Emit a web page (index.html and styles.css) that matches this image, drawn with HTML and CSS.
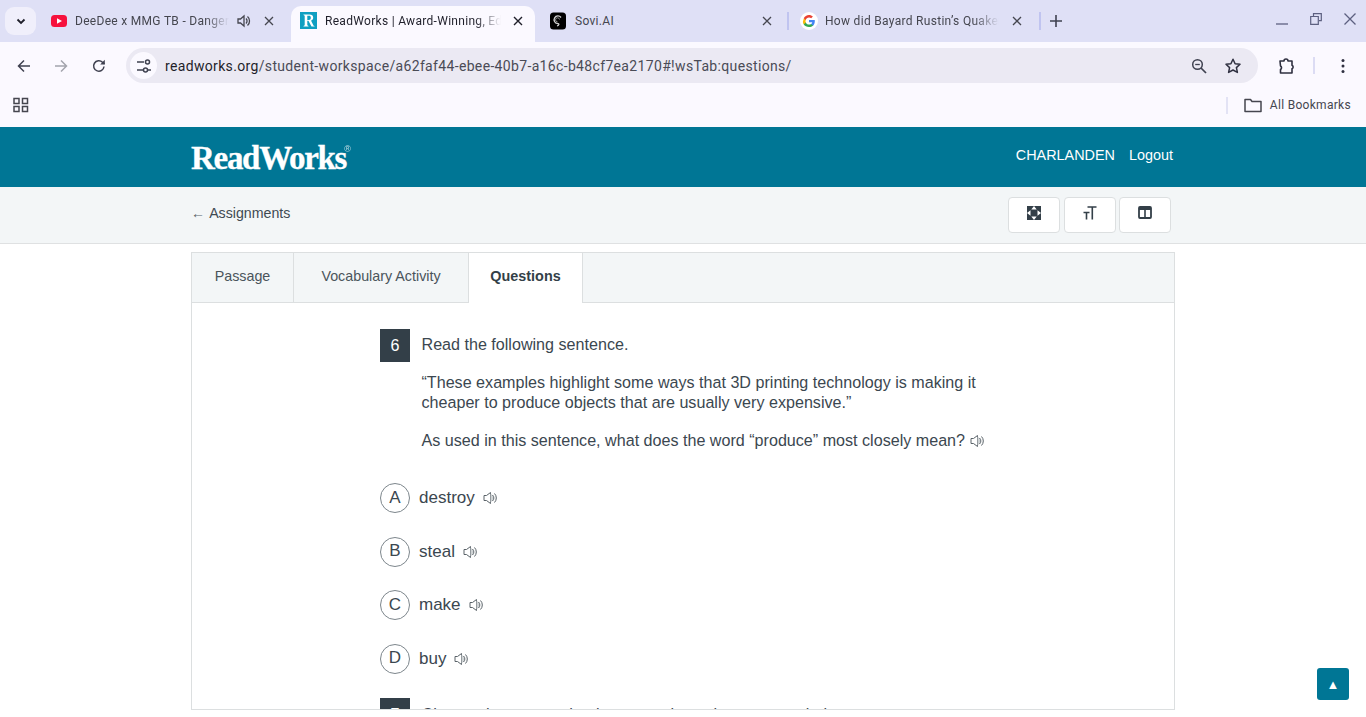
FILE: index.html
```html
<!DOCTYPE html>
<html lang="en">
<head>
<meta charset="utf-8">
<title>ReadWorks</title>
<link rel="stylesheet" href="styles.css">
</head>
<body>
<div class="browser">
  <div class="tabstrip">
    <button class="tabsearch"><svg width="12" height="12" viewBox="0 0 12 12"><path d="M2.500 4.500 6 8l3.500-3.500" fill="none" stroke="#1f1f2a" stroke-width="1.800"/></svg></button>
    <div class="tab tab-yt">
      <svg class="fav" width="18" height="18" viewBox="0 0 18 18"><rect x="1" y="3" width="16" height="12" rx="3.500" fill="#f6113d"/><path d="M7 6.200v5.600L12 9z" fill="#fff"/></svg>
      <span class="tab-title">DeeDee x MMG TB - Danger Zone</span>
      <svg class="audio" width="16" height="16" viewBox="0 0 16 16"><path d="M2 6v4h2.500L8 13V3L4.500 6z" fill="none" stroke="#45464f" stroke-width="1.300"/><path d="M10 5.500a3.500 3.500 0 0 1 0 5M11.500 3.500a6 6 0 0 1 0 9" fill="none" stroke="#45464f" stroke-width="1.300"/></svg>
      <svg class="close" width="10" height="10" viewBox="0 0 10 10"><path d="M1 1l8 8M9 1l-8 8" stroke="#45464f" stroke-width="1.300"/></svg>
    </div>
    <div class="tab tab-active">
      <svg class="fav" width="17" height="17" viewBox="0 0 17 17"><rect width="17" height="17" fill="#0f9fc1"/><path d="M3.500 2.500h6c2.400 0 3.700 1.200 3.700 3.200 0 1.500-.9 2.500-2.200 2.900l2.600 5.200.9.300v.5h-3l-3.100-5.800H7.300v4.500l1.200.8v.5H3.500v-.5l1.200-.8V3.800l-1.200-.8zM7.300 3.800V8h1.600c1.300 0 1.900-.8 1.900-2.200s-.6-2-1.900-2z" fill="#fff"/></svg>
      <span class="tab-title title-active">ReadWorks | Award-Winning, Edtech Nonprofit</span>
      <svg class="close" width="10" height="10" viewBox="0 0 10 10"><path d="M1 1l8 8M9 1l-8 8" stroke="#1f1f2a" stroke-width="1.400"/></svg>
    </div>
    <div class="tab tab-sovi">
      <svg class="fav" width="18" height="18" viewBox="0 0 18 18"><rect x="1" y="0.500" width="16" height="17" rx="3.500" fill="#000"/><path d="M12 5.500a3.800 3.800 0 1 0-3.500 6c1.800 0 2 2-.5 2.300" fill="none" stroke="#d0d0d0" stroke-width="1.300"/><path d="M10.500 7.500a2 2 0 1 0-2 2.300" fill="none" stroke="#909090"/></svg>
      <span class="tab-title tab-title-full">Sovi.AI</span>
      <svg class="close" width="10" height="10" viewBox="0 0 10 10"><path d="M1 1l8 8M9 1l-8 8" stroke="#45464f" stroke-width="1.300"/></svg>
    </div>
    <span class="tab-divider"></span>
    <div class="tab tab-g">
      <svg class="fav" width="18" height="18" viewBox="0 0 18 18"><circle cx="9" cy="9" r="9" fill="#fff"/><path d="M14.800 9.200c0-.5 0-.9-.1-1.300H9v2.400h3.300c-.2.800-.6 1.400-1.200 1.900v1.500h2c1.100-1.100 1.700-2.600 1.700-4.500z" fill="#4285f4"/><path d="M9 15c1.600 0 3-.5 4-1.500l-2-1.500c-.5.400-1.200.6-2 .6-1.500 0-2.800-1-3.300-2.400h-2V12.300C4.700 14 6.700 15 9 15z" fill="#34a853"/><path d="M5.700 10.700c-.3-.8-.3-1.600 0-2.400V6.700h-2a6 6 0 0 0 0 5.600z" fill="#fbbc05"/><path d="M9 5.400c.9 0 1.600.3 2.200.9l1.700-1.700C11.900 3.600 10.500 3 9 3 6.700 3 4.700 4.300 3.700 6.300l2 1.600C6.200 6.400 7.500 5.400 9 5.400z" fill="#ea4335"/></svg>
      <span class="tab-title">How did Bayard Rustin’s Quaker upbringing</span>
      <svg class="close" width="10" height="10" viewBox="0 0 10 10"><path d="M1 1l8 8M9 1l-8 8" stroke="#45464f" stroke-width="1.300"/></svg>
    </div>
    <span class="tab-divider divider-2"></span>
    <svg class="newtab" width="12" height="12" viewBox="0 0 12 12"><path d="M6 0v12M0 6h12" stroke="#3f4150" stroke-width="1.600"/></svg>
    <div class="winctrls">
      <svg width="12" height="12" viewBox="0 0 12 12"><path d="M0 11h12" stroke="#5d6080" stroke-width="1.300"/></svg>
      <svg width="12" height="12" viewBox="0 0 12 12"><path d="M3.500 3V.7h7.800v7H9M.7 3.500h7.600v7.800H.7z" fill="none" stroke="#5d6080" stroke-width="1.200"/></svg>
      <svg width="12" height="12" viewBox="0 0 12 12"><path d="M.5.500l11 11M11.500.500l-11 11" stroke="#5d6080" stroke-width="1.300"/></svg>
    </div>
  </div>
  <div class="toolbar">
    <svg class="nav-back" width="16" height="16" viewBox="0 0 16 16"><path d="M14 8H2.500M8 2.500 2.500 8 8 13.500" fill="none" stroke="#3f4150" stroke-width="1.500"/></svg>
    <svg class="nav-fwd" width="16" height="16" viewBox="0 0 16 16"><path d="M2 8h11.500M8 2.500 13.500 8 8 13.500" fill="none" stroke="#a3a4ad" stroke-width="1.500"/></svg>
    <svg class="nav-reload" width="16" height="16" viewBox="0 0 16 16"><path d="M13 8.500A5.200 5.200 0 1 1 11.500 4.300L13.500 6" fill="none" stroke="#3f4150" stroke-width="1.500"/><path d="M13.800 1.800v4.600H9.200z" fill="#3f4150"/></svg>
    <div class="omnibox">
      <span class="site-info"><svg width="16" height="16" viewBox="0 0 16 16"><path d="M1 4h7M12 12h3M1 12h6" stroke="#3f4150" stroke-width="1.500"/><circle cx="11.500" cy="4" r="2" fill="none" stroke="#3f4150" stroke-width="1.500"/><circle cx="9.500" cy="12" r="2" fill="none" stroke="#3f4150" stroke-width="1.500"/></svg></span>
      <span class="url"><span class="url-host">readworks.org</span>/student-workspace/a62faf44-ebee-40b7-a16c-b48cf7ea2170#!wsTab:questions/</span>
      <svg class="omni-zoom" width="16" height="16" viewBox="0 0 16 16"><circle cx="6.500" cy="6.500" r="4.800" fill="none" stroke="#3f4150" stroke-width="1.500"/><path d="M10 10l5 5" stroke="#3f4150" stroke-width="1.700"/><path d="M4.200 6.500h4.600" stroke="#3f4150" stroke-width="1.300"/></svg>
      <svg class="omni-star" width="18" height="18" viewBox="0 0 18 18"><path d="M9 2.200l2.100 4.500 4.900.6-3.600 3.300 1 4.800L9 13l-4.400 2.400 1-4.800L2 7.300l4.900-.6z" fill="none" stroke="#2f3040" stroke-width="1.500" stroke-linejoin="round"/></svg>
    </div>
    <svg class="ext" width="18" height="18" viewBox="0 0 18 18"><path d="M2 4h4a2 2 0 0 1 4 0h4v4.200a2 2 0 0 1 0 3.600V16H2.500v-3.500a2 2 0 0 0 0-3.500z" fill="none" stroke="#2f3040" stroke-width="1.600" stroke-linejoin="round"/></svg>
    <span class="tool-divider"></span>
    <svg class="menu-dots" width="4" height="16" viewBox="0 0 4 16"><circle cx="2" cy="2.500" r="1.500" fill="#2f3040"/><circle cx="2" cy="8" r="1.500" fill="#2f3040"/><circle cx="2" cy="13.500" r="1.500" fill="#2f3040"/></svg>
  </div>
  <div class="bookmarks">
    <svg class="apps" width="16" height="16" viewBox="0 0 16 16"><g fill="none" stroke="#45464f" stroke-width="1.500"><rect x="1" y="1.500" width="5" height="5"/><rect x="9.500" y="1.500" width="5" height="5"/><rect x="1" y="9.500" width="5" height="5"/><rect x="9.500" y="9.500" width="5" height="5"/></g></svg>
    <span class="bm-divider"></span>
    <svg class="folder" width="18" height="16" viewBox="0 0 18 16"><path d="M1 2.500h5.500l1.500 2h9v10H1z" fill="none" stroke="#45464f" stroke-width="1.500" stroke-linejoin="round"/></svg>
    <span class="bm-label">All Bookmarks</span>
  </div>
</div>

<header class="site-header">
  <div class="wrap header-row">
    <span class="logo">ReadWorks<sup class="reg">®</sup></span>
    <nav class="user-nav"><span>CHARLANDEN</span><span>Logout</span></nav>
  </div>
</header>

<div class="subbar">
  <div class="wrap subbar-row">
    <span class="back-link"><span class="back-arrow">←</span> Assignments</span>
    <div class="tools">
      <button class="tool"><svg width="14" height="14" viewBox="0 0 14 14"><path d="M0 0h14v14H0z" fill="#333f48"/><path d="M7 0l2.700 3.500H4.300zM7 14l-2.700-3.500h5.400zM0 7l3.500-2.700v5.400zM14 7l-3.500 2.700V4.300z" fill="#fff"/></svg></button>
      <button class="tool"><svg width="14" height="14" viewBox="0 0 14 14"><path d="M4.500 1h9M9.300 1v12.500M0.500 6.500h6M3.500 6.500v7" fill="none" stroke="#333f48" stroke-width="1.600"/></svg></button>
      <button class="tool"><svg width="14" height="13" viewBox="0 0 14 13"><rect x="1" y="1" width="12" height="11" rx="1" fill="none" stroke="#333f48" stroke-width="1.800"/><path d="M1 2.500h12" stroke="#333f48" stroke-width="3"/><path d="M7 2v10" stroke="#333f48" stroke-width="1.600"/></svg></button>
    </div>
  </div>
</div>

<main class="wrap panel">
  <div class="tabs">
    <span class="ptab ptab-passage">Passage</span>
    <span class="ptab ptab-vocab">Vocabulary Activity</span>
    <span class="ptab ptab-active">Questions</span>
  </div>
  <div class="questions">
    <section class="question">
      <div class="q-head">
        <span class="q-num">6</span>
        <div class="q-body">
          <p class="q-first">Read the following sentence.</p>
          <p>“These examples highlight some ways that 3D printing technology is making it cheaper to produce objects that are usually very expensive.”</p>
          <p>As used in this sentence, what does the word “produce” most closely mean? <svg class="spk" width="16" height="14" viewBox="0 0 16 14"><path d="M1 4.500v5h2.500L7.500 12.500v-11L3.500 4.500z" fill="#fff" stroke="#5a6369"/><path d="M7.500 2.500 10 4.500v5L7.500 11.500z" fill="#cfd3d5"/><path d="M9.500 4a4 4 0 0 1 0 6M11.500 2.500a6.500 6.500 0 0 1 0 9" fill="none" stroke="#5a6369"/></svg></p>
        </div>
      </div>
      <ul class="answers">
        <li class="answer"><span class="letter">A</span><span class="a-text">destroy</span><svg class="spk" width="16" height="14" viewBox="0 0 16 14"><path d="M1 4.500v5h2.500L7.500 12.500v-11L3.500 4.500z" fill="#fff" stroke="#5a6369"/><path d="M7.500 2.500 10 4.500v5L7.500 11.500z" fill="#cfd3d5"/><path d="M9.500 4a4 4 0 0 1 0 6M11.500 2.500a6.500 6.500 0 0 1 0 9" fill="none" stroke="#5a6369"/></svg></li>
        <li class="answer"><span class="letter">B</span><span class="a-text">steal</span><svg class="spk" width="16" height="14" viewBox="0 0 16 14"><path d="M1 4.500v5h2.500L7.500 12.500v-11L3.500 4.500z" fill="#fff" stroke="#5a6369"/><path d="M7.500 2.500 10 4.500v5L7.500 11.500z" fill="#cfd3d5"/><path d="M9.500 4a4 4 0 0 1 0 6M11.500 2.500a6.500 6.500 0 0 1 0 9" fill="none" stroke="#5a6369"/></svg></li>
        <li class="answer"><span class="letter">C</span><span class="a-text">make</span><svg class="spk" width="16" height="14" viewBox="0 0 16 14"><path d="M1 4.500v5h2.500L7.500 12.500v-11L3.500 4.500z" fill="#fff" stroke="#5a6369"/><path d="M7.500 2.500 10 4.500v5L7.500 11.500z" fill="#cfd3d5"/><path d="M9.500 4a4 4 0 0 1 0 6M11.500 2.500a6.500 6.500 0 0 1 0 9" fill="none" stroke="#5a6369"/></svg></li>
        <li class="answer"><span class="letter">D</span><span class="a-text">buy</span><svg class="spk" width="16" height="14" viewBox="0 0 16 14"><path d="M1 4.500v5h2.500L7.500 12.500v-11L3.500 4.500z" fill="#fff" stroke="#5a6369"/><path d="M7.500 2.500 10 4.500v5L7.500 11.500z" fill="#cfd3d5"/><path d="M9.500 4a4 4 0 0 1 0 6M11.500 2.500a6.500 6.500 0 0 1 0 9" fill="none" stroke="#5a6369"/></svg></li>
      </ul>
    </section>
    <section class="question next">
      <div class="q-head">
        <span class="q-num">7</span>
        <div class="q-body"><p class="q-first">Choose the answer that best completes the sentence below.</p></div>
      </div>
    </section>
  </div>
</main>
<button class="to-top">▲</button>
</body>
</html>
```
FILE: styles.css
```css
* { box-sizing: border-box; }
html, body { margin: 0; height: 717px; overflow: hidden; background: #fff; }
body { font-family: "Liberation Sans", Arial, sans-serif; color: #3b4750; }
svg { display: block; flex: none; }
button { font: inherit; }

.browser { height: 127px; background: #fbf9ff; font-family: Roboto, "Liberation Sans", sans-serif; }
.tabstrip { height: 42px; background: #dfe0f6; display: flex; align-items: center; padding-left: 5px; position: relative; }
.tabsearch { width: 31px; height: 28px; border: 0; border-radius: 9px; background: #f0effb; display: flex; align-items: center; justify-content: center; padding: 0; margin-right: 14px; margin-top: -1px; }
.tab { display: flex; align-items: center; height: 36px; font-size: 12px; letter-spacing: .3px; color: #45464f; flex: none; }
.fav { margin-top: -1px; }
.tab-title { display: block; white-space: nowrap; overflow: hidden; -webkit-mask-image: linear-gradient(90deg, #000 85%, transparent 100%); mask-image: linear-gradient(90deg, #000 85%, transparent 100%); margin-top: -1px; }
.tab-yt { width: 224px; }
.tab-yt .tab-title { width: 158px; margin-left: 7px; }
.tab-yt .audio { margin-left: 7px; }
.tab-yt .close { margin-left: 12px; }
.tab-active { width: 244px; margin-left: 17px; margin-top: 6px; padding-bottom: 6px; background: #fbf9ff; border-radius: 10px 10px 0 0; padding-left: 9px; color: #1f1f2a; }
.tab-active .tab-title { width: 176px; margin-left: 8px; }
.tab-active .close { margin-left: 12px; }
.tab-sovi { width: 223px; margin-left: 14px; }
.tab-sovi .tab-title { width: 185px; margin-left: 8px; }
.tab-sovi .close { margin-left: 4px; }
.tab-title-full { -webkit-mask-image: none; mask-image: none; }
.tab-divider { width: 2px; height: 18px; background: #c0c4f0; margin-left: 15px; flex: none; }
.divider-2 { margin-left: 17px; }
.tab-g { width: 222px; margin-left: 11px; }
.tab-g .tab-title { width: 177px; margin-left: 7px; }
.tab-g .close { margin-left: 13px; }
.newtab { margin-left: 9px; }
.winctrls { display: flex; align-items: center; gap: 22px; margin-left: auto; padding-right: 10px; margin-top: -5px; }

.toolbar { height: 47px; display: flex; align-items: center; padding-left: 16px; }
.nav-fwd { margin-left: 21px; }
.nav-reload { margin-left: 22px; }
.omnibox { width: 1132px; height: 35px; margin-left: 19px; border-radius: 18px; background: #ebe9f3; display: flex; align-items: center; padding-left: 4px; }
.site-info { width: 27px; height: 27px; border-radius: 50%; background: #fbf9ff; display: flex; align-items: center; justify-content: center; flex: none; }
.url { margin-left: 8px; font-size: 14px; letter-spacing: .34px; color: #4a4b56; white-space: nowrap; }
.url-host { color: #1f1f2a; }
.omni-zoom { margin-left: auto; }
.omni-star { margin-left: 17px; margin-right: 16px; }
.ext { margin-left: 20px; }
.tool-divider { width: 2px; height: 17px; background: #dcdcf4; margin-left: 17px; }
.menu-dots { margin-left: 26px; }

.bookmarks { height: 38px; display: flex; align-items: center; padding-left: 13px; padding-right: 15px; margin-top: -3px; }
.apps { margin-right: auto; }
.bm-divider { width: 2px; height: 17px; background: #e3e3f5; margin-right: 16px; }
.bm-label { margin-left: 8px; font-size: 12px; letter-spacing: .3px; color: #45464f; }

.wrap { width: 984px; margin: 0 auto; }
.site-header { height: 60px; background: #007695; color: #fff; }
.header-row { height: 100%; display: flex; align-items: center; justify-content: space-between; }
.logo { font-family: "Liberation Serif", serif; font-weight: 700; font-size: 33px; letter-spacing: -1.300px; line-height: 1; position: relative; margin-top: 3px; -webkit-text-stroke: .3px #fff; }
.reg { font-family: "Liberation Sans", sans-serif; font-size: 9px; font-weight: 400; letter-spacing: 0; position: absolute; top: 3px; margin-left: -2px; line-height: 1; opacity: .75; -webkit-text-stroke: 0; }
.user-nav { display: flex; gap: 14px; font-size: 14.400px; margin-right: 2px; margin-top: -4px; }

.subbar { height: 57px; background: #f3f6f7; border-bottom: 1px solid #dfe1e2; }
.subbar-row { height: 100%; display: flex; align-items: center; justify-content: space-between; }
.back-link { font-size: 14.200px; color: #3f4a52; margin-top: -5px; }
.back-arrow { color: #59636a; font-size: 14px; margin-right: 1px; }
.tools { display: flex; gap: 4px; margin-right: 4px; }
.tool { width: 52px; height: 36px; border: 1px solid #dcdfe0; border-radius: 4px; background: #fff; display: flex; align-items: center; justify-content: center; padding: 0 0 5px; }
.tool:nth-child(3) { margin-left: -1px; }

.panel { margin-top: 8px; height: 458px; border: 1px solid #dcdfe0; overflow: hidden; }
.tabs { height: 50px; display: flex; background: #f3f6f7; border-bottom: 1px solid #dcdfe0; font-size: 14.300px; color: #4a545b; }
.ptab { display: flex; align-items: center; justify-content: center; border-right: 1px solid #dcdfe0; padding-bottom: 4px; }
.ptab-passage { width: 102px; }
.ptab-vocab { width: 175px; }
.ptab-active { width: 114px; height: 50px; background: #fff; font-weight: 700; font-size: 14.400px; color: #333f48; }

.questions { padding: 26px 0 0 188px; }
.question { width: 620px; font-size: 16.120px; line-height: 20px; }
.q-head { display: flex; gap: 11.500px; }
.q-num { width: 30px; height: 33px; background: #333f48; color: #fff; display: flex; align-items: center; justify-content: center; flex: none; padding-bottom: 1px; }
.q-body p { margin: 0 0 18px; }
.q-body .q-first { margin-top: 5px; }
.next .q-body .q-first { margin-top: 6px; }
.q-body p:last-child { margin-bottom: 0; }
.spk { display: inline-block; vertical-align: -2px; }
.answers { list-style: none; margin: 33px 0 0; padding: 0; display: flex; flex-direction: column; gap: 23.500px; }
.answer { display: flex; align-items: center; height: 30px; font-size: 17px; }
.letter { width: 30px; height: 30px; border: 1px solid #7d868c; border-radius: 50%; display: flex; align-items: center; justify-content: center; flex: none; padding-bottom: 1px; }
.a-text { margin-left: 9px; }
.answer .spk { margin-left: 8px; }
.next { margin-top: 24px; }

.to-top { position: fixed; right: 17px; top: 668px; width: 32px; height: 32px; border: 0; border-radius: 3px; background: #007695; color: #fff; font-size: 13px; padding: 0; }
```
